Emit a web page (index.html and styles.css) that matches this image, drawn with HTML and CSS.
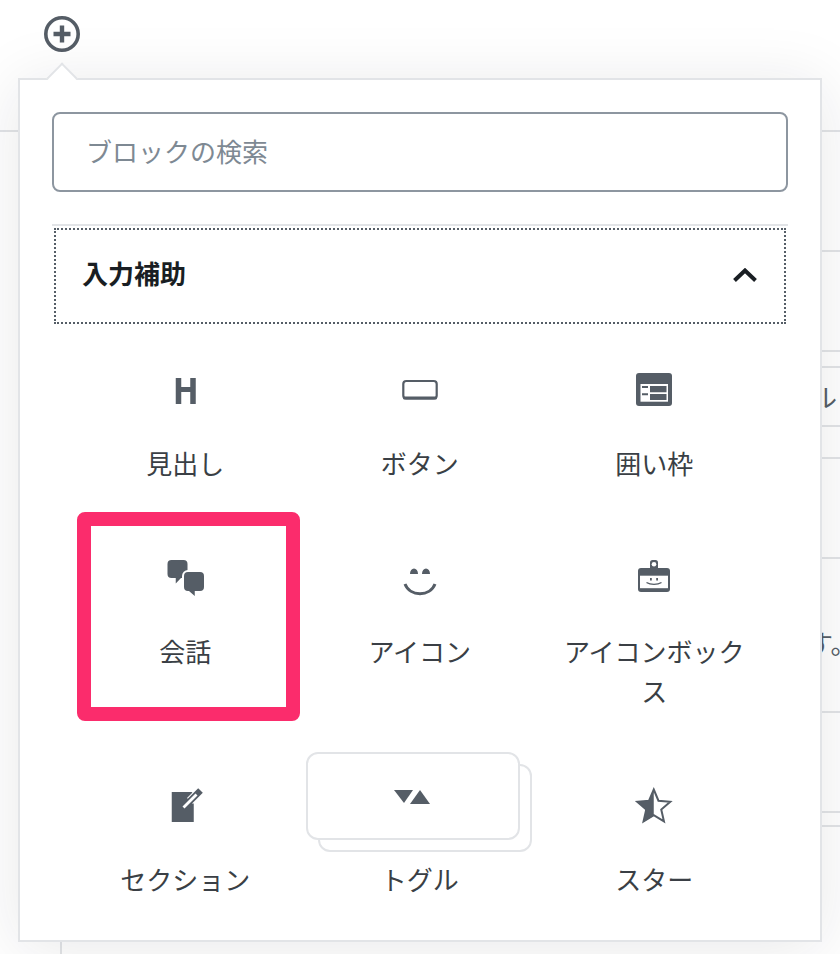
FILE: index.html
```html
<!DOCTYPE html>
<html lang="ja">
<head>
    <meta charset="UTF-8">
    <meta name="viewport" content="width=device-width, initial-scale=1.0">
    <title>ブロックの検索</title>
    <link rel="stylesheet" href="styles.css">
</head>
<body>
    <div class="page">
        <div class="left-rail">
            <div class="toolbar">
                <svg class="add-icon" viewBox="0 0 36 36" width="36" height="36">
                    <circle cx="18" cy="18" r="16.2" fill="none" stroke="#555d66" stroke-width="3.6"/>
                    <path d="M9.5 18h17M18 9.5v17" fill="none" stroke="#555d66" stroke-width="4.4"/>
                </svg>
            </div>
            <div class="left-tail"></div>
        </div>
        <div class="right-rail">
            <div class="rail-row"></div>
            <div class="rail-row"></div>
            <div class="rail-row"></div>
            <div class="rail-row"></div>
            <div class="rail-row"><span class="cut-a">ル</span></div>
            <div class="rail-row"></div>
            <div class="rail-row"></div>
            <div class="rail-row"><span class="cut-b">す。</span></div>
            <div class="rail-row"></div>
            <div class="rail-row"></div>
        </div>
    </div>

    <div class="popover">
        <input class="search" type="text" placeholder="ブロックの検索">

        <div class="panel">
            <button class="panel-title">
                <span class="panel-name">入力補助</span>
                <svg viewBox="0 0 24 16" width="24" height="16">
                    <path d="M1.5 12.5L12 2.500l10.500 10" fill="none" stroke="#191e23" stroke-width="4"/>
                </svg>
            </button>

            <div class="block-grid">
                <div class="block-item">
                    <svg class="block-icon" viewBox="0 0 36 36">
                        <path d="M8.75 6h5.5v9h9V6h5.5v26h-5.5V20h-9v12h-5.5z"/>
                    </svg>
                    <div class="block-label">見出し</div>
                </div>
                <div class="block-item">
                    <svg class="block-icon" viewBox="0 0 36 36">
                        <rect x="1.3" y="9" width="33.4" height="17.5" rx="3" fill="none" stroke="#555d66" stroke-width="2.2"/>
                        <rect x="1" y="24.5" width="34" height="3" rx="1.5"/>
                    </svg>
                    <div class="block-label">ボタン</div>
                </div>
                <div class="block-item">
                    <svg class="block-icon" viewBox="0 0 36 36">
                        <rect x="0" y="1" width="36" height="33" rx="3"/>
                        <rect x="4.5" y="12" width="27.5" height="17.7" fill="#fff"/>
                        <path d="M6 14h6v2H6zM6 21.3h6v2H6zM14 14h16.5v6.3H14zM14 22h16.5v6H14z"/>
                    </svg>
                    <div class="block-label">囲い枠</div>
                </div>

                <div class="block-item is-marked">
                    <svg class="block-icon" viewBox="0 0 36 36">
                        <path d="M4.5 0h12a4 4 0 0 1 4 4v10a4 4 0 0 1-4 4H14l-5.25 5.5V18H4.5a4 4 0 0 1-4-4V4a4 4 0 0 1 4-4z"/>
                        <path d="M21 12h12a4 4 0 0 1 4 4v11a4 4 0 0 1-4 4h-5.25V36L22 31h-1a4 4 0 0 1-4-4V16a4 4 0 0 1 4-4z" stroke="#fff" stroke-width="4" paint-order="stroke"/>
                    </svg>
                    <div class="block-label">会話</div>
                </div>
                <div class="block-item">
                    <svg class="block-icon" viewBox="0 0 36 36">
                        <path d="M8 14a4 5.5 0 0 1 8 0zM20 14a4 5.5 0 0 1 8 0z"/>
                        <path d="M3 24c5 13 25 13 30 0" fill="none" stroke="#555d66" stroke-width="3"/>
                    </svg>
                    <div class="block-label">アイコン</div>
                </div>
                <div class="block-item">
                    <svg class="block-icon" viewBox="0 0 36 36">
                        <rect x="14" y="0" width="8" height="11" rx="2.5"/>
                        <circle cx="18" cy="4.2" r="2.3" fill="#fff"/>
                        <rect x="2" y="8" width="32" height="24" rx="3"/>
                        <rect x="4" y="15.7" width="28" height="12.5" fill="#fff"/>
                        <path d="M14 18h1.8v2.5H14zM20.2 18H22v2.5h-1.8z"/>
                        <path d="M10.5 22.5c4 2.5 11 2.5 15 0" fill="none" stroke="#555d66" stroke-width="1.4"/>
                    </svg>
                    <div class="block-label">アイコンボックス</div>
                </div>

                <div class="block-item">
                    <svg class="block-icon" viewBox="0 0 36 36">
                        <path d="M4.75 4h20l2 2v28h-22z"/>
                        <path d="M23 13L33 3" stroke="#fff" stroke-width="8.5" fill="none"/>
                        <path d="M21 15L33.5 2.5" stroke="#555d66" stroke-width="6.5" fill="none"/>
                        <path d="M16.5 19.5L29.5 6.5" stroke="#fff" stroke-width="2.8" fill="none"/>
                    </svg>
                    <div class="block-label">セクション</div>
                </div>
                <div class="block-item">
                    <span class="toggle-card back"></span>
                    <span class="toggle-card front"></span>
                    <svg class="block-icon" viewBox="0 0 36 36">
                        <path d="M-8 2h19L2 15z"/>
                        <path d="M18 2l10 14H8z"/>
                    </svg>
                    <div class="block-label">トグル</div>
                </div>
                <div class="block-item">
                    <svg class="block-icon" viewBox="0 0 36 36">
                        <path d="M17.75 1.5l4.7 11.2 11.8 1-9 7.800 2.700 11.800-10.200-6.200-10.200 6.200 2.700-11.800-9-7.800 11.800-1z" fill="#fff" stroke="#555d66" stroke-width="2"/>
                        <path d="M17.75 1.5v26.300L7.550 34l2.700-12.500-9-7.800 11.800-1z"/>
                    </svg>
                    <div class="block-label">スター</div>
                </div>
            </div>
        </div>
    </div>
</body>
</html>
```

FILE: styles.css
```css
body {
    margin: 0;
    height: 954px;
    overflow: hidden;
    background-color: #fff;
    color: #3a3f45;
    font-family: "Noto Sans CJK JP", "Liberation Sans", sans-serif;
}

/* page behind the popover */
.page {
    display: flex;
    justify-content: space-between;
    height: 954px;
}

.left-rail {
    display: flex;
    flex-direction: column;
    justify-content: space-between;
    width: 62px;
}

.toolbar {
    box-sizing: border-box;
    height: 132px;
    padding: 16px 0 0 44px;
    border-bottom: 2px solid #e2e4e7;
}

.add-icon {
    display: block;
}

.left-tail {
    height: 40px;
    border-right: 2px solid #e2e4e7;
}

.right-rail {
    display: flex;
    flex-direction: column;
    width: 18px;
    color: #555d66;
    font-size: 26px;
    white-space: nowrap;
}

.rail-row {
    box-sizing: border-box;
    display: flex;
    align-items: center;
    border-bottom: 2px solid #e2e4e7;
}

.rail-row:nth-child(1) { height: 132px; }
.rail-row:nth-child(2) { height: 120px; }
.rail-row:nth-child(3) { height: 100px; }
.rail-row:nth-child(4) { height: 16px; }
.rail-row:nth-child(5) { height: 59px; }
.rail-row:nth-child(6) { height: 32px; }
.rail-row:nth-child(7) { height: 100px; }
.rail-row:nth-child(8) { height: 154px; padding-top: 14px; }
.rail-row:nth-child(9) { height: 100px; }
.rail-row:nth-child(10) { height: 14px; }

.cut-a {
    margin-left: -11px;
}

.cut-b {
    margin-left: -15px;
}

/* inserter popover */
.popover {
    position: absolute;
    left: 18px;
    top: 78px;
    box-sizing: border-box;
    width: 804px;
    height: 864px;
    padding: 32px 32px 0;
    background-color: #fff;
    border: 2px solid #e2e4e7;
    box-shadow: 0 6px 60px rgba(25, 30, 35, 0.1);
}

.popover::before {
    content: "";
    position: absolute;
    left: 31px;
    top: -13px;
    box-sizing: border-box;
    width: 22px;
    height: 22px;
    background-color: #fff;
    border-top: 2px solid #e2e4e7;
    border-left: 2px solid #e2e4e7;
    transform: rotate(45deg);
}

.search {
    display: block;
    position: relative;
    box-sizing: border-box;
    width: 100%;
    height: 80px;
    padding: 0 32px 4px;
    font-size: 26px;
    font-family: inherit;
    color: #32373c;
    border: 2px solid #8d96a0;
    border-radius: 8px;
}

.search::placeholder {
    color: #7e8993;
}

.panel {
    margin-top: 32px;
    border-top: 2px solid #e2e4e7;
}

.panel-title {
    display: flex;
    align-items: center;
    justify-content: space-between;
    box-sizing: border-box;
    width: 100%;
    height: 100px;
    padding: 0 31px 0 30px;
    background: none;
    border: none;
    outline: 2px dotted #555d66;
    outline-offset: -4px;
    color: #191e23;
    font-size: 26px;
    font-weight: 700;
    font-family: inherit;
}

.panel-name {
    padding-bottom: 8px;
}

.block-grid {
    display: grid;
    grid-template-columns: repeat(3, 234.5px);
    margin: 8px 0 0 16px;
}

.block-item {
    position: relative;
    padding: 38px 20px;
    text-align: center;
}

.block-icon {
    display: block;
    position: relative;
    width: 36px;
    height: 36px;
    margin: 0 auto 35px;
    overflow: visible;
    fill: #555d66;
}

.block-label {
    position: relative;
    margin-bottom: 1px;
    font-size: 26px;
    line-height: 40px;
}

/* pink marker drawn on the screenshot */
.is-marked::after {
    content: "";
    position: absolute;
    left: 9px;
    top: -10px;
    box-sizing: border-box;
    width: 223px;
    height: 209px;
    border: 14px solid #fb2c6c;
    border-radius: 8px;
}

.toggle-card {
    position: absolute;
    box-sizing: border-box;
    width: 214px;
    height: 88px;
    background-color: #fff;
    border: 2px solid #e2e4e7;
    border-radius: 12px;
}

.toggle-card.front {
    left: 3.5px;
    top: 2px;
}

.toggle-card.back {
    left: 15.5px;
    top: 14px;
}
```
